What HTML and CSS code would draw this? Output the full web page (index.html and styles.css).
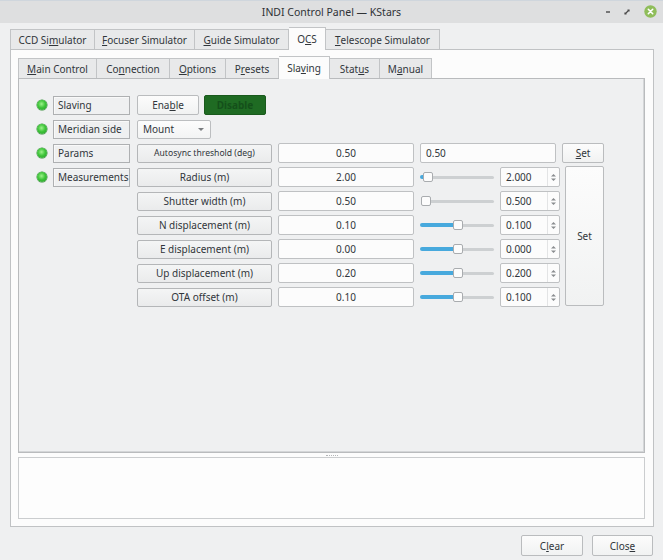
FILE: index.html
```html
<!DOCTYPE html>
<html>
<head>
<meta charset="utf-8">
<link rel="stylesheet" href="styles.css">
</head>
<body>
<div class="window">
  <div class="titlebar">
    <span class="title">INDI Control Panel — KStars</span>
    <div class="wm">
      <svg class="wm-min" width="10" height="10" viewBox="0 0 10 10"><path d="M3 5h4" stroke="#4a4a4a" stroke-width="1.4"/></svg>
      <svg class="wm-max" width="10" height="10" viewBox="0 0 10 10"><path d="M3 7l4-4M5.5 3H7v1.5M3 5.5V7h1.5" stroke="#4a4a4a" stroke-width="1.2" fill="none"/></svg>
      <svg class="wm-close" width="13" height="13" viewBox="0 0 13 13"><circle cx="6.5" cy="6.5" r="6.2" fill="#8fbd5a"/><path d="M4.3 4.3l4.4 4.4M8.7 4.3l-4.4 4.4" stroke="#ffffff" stroke-width="1.6" stroke-linecap="round"/></svg>
    </div>
  </div>
  <div class="body">
    <div class="tabbar outer">
      <div class="tab t-ccd">CCD Si<u>m</u>ulator</div>
      <div class="tab t-foc"><u>F</u>ocuser Simulator</div>
      <div class="tab t-guide"><u>G</u>uide Simulator</div>
      <div class="tab t-ocs sel">O<u>C</u>S</div>
      <div class="tab t-tel"><u>T</u>elescope Simulator</div>
    </div>
    <div class="outer-pane">
      <div class="tabbar inner">
        <div class="tab i-main"><u>M</u>ain Control</div>
        <div class="tab i-conn">Co<u>n</u>nection</div>
        <div class="tab i-opt"><u>O</u>ptions</div>
        <div class="tab i-pre">P<u>r</u>esets</div>
        <div class="tab i-sla sel">Sla<u>v</u>ing</div>
        <div class="tab i-sta">Stat<u>u</u>s</div>
        <div class="tab i-man">M<u>a</u>nual</div>
      </div>
      <div class="inner-pane">
        <div class="props">
          <div class="row">
            <span class="led"></span><span class="plabel">Slaving</span>
            <button class="btn enable">Ena<u>b</u>le</button>
            <button class="btn disable">Disable</button>
          </div>
          <div class="row">
            <span class="led"></span><span class="plabel">Meridian side</span>
            <div class="combo"><span>Mount</span><span class="arrow"></span></div>
          </div>
          <div class="row">
            <span class="led"></span><span class="plabel">Params</span>
            <div class="name small">Autosync threshold (deg)</div>
            <div class="field center">0.50</div>
            <div class="field wide">0.50</div>
            <button class="btn set"><u>S</u>et</button>
          </div>
          <div class="meas">
            <div class="meas-rows">
              <div class="row">
                <span class="led"></span><span class="plabel">Measurements</span>
                <div class="name">Radius (m)</div>
                <div class="field center">2.00</div>
                <div class="slider"><div class="fill f-radius"></div><div class="handle h-radius"></div></div>
                <div class="spin"><span class="val">2.000</span><span class="arrows"><svg width="7" height="11" viewBox="0 0 7 11"><path d="M1 4.5L3.5 2L6 4.5Z M1 6.5L3.5 9L6 6.5Z" fill="#8a8d90"/></svg></span></div>
              </div>
              <div class="row">
                <span class="led-sp"></span><span class="label-sp"></span>
                <div class="name">Shutter width (m)</div>
                <div class="field center">0.50</div>
                <div class="slider"><div class="handle h-shutter"></div></div>
                <div class="spin"><span class="val">0.500</span><span class="arrows"><svg width="7" height="11" viewBox="0 0 7 11"><path d="M1 4.5L3.5 2L6 4.5Z M1 6.5L3.5 9L6 6.5Z" fill="#8a8d90"/></svg></span></div>
              </div>
              <div class="row">
                <span class="led-sp"></span><span class="label-sp"></span>
                <div class="name">N displacement (m)</div>
                <div class="field center">0.10</div>
                <div class="slider"><div class="fill f-mid"></div><div class="handle h-mid"></div></div>
                <div class="spin"><span class="val">0.100</span><span class="arrows"><svg width="7" height="11" viewBox="0 0 7 11"><path d="M1 4.5L3.5 2L6 4.5Z M1 6.5L3.5 9L6 6.5Z" fill="#8a8d90"/></svg></span></div>
              </div>
              <div class="row">
                <span class="led-sp"></span><span class="label-sp"></span>
                <div class="name">E displacement (m)</div>
                <div class="field center">0.00</div>
                <div class="slider"><div class="fill f-mid"></div><div class="handle h-mid"></div></div>
                <div class="spin"><span class="val">0.000</span><span class="arrows"><svg width="7" height="11" viewBox="0 0 7 11"><path d="M1 4.5L3.5 2L6 4.5Z M1 6.5L3.5 9L6 6.5Z" fill="#8a8d90"/></svg></span></div>
              </div>
              <div class="row">
                <span class="led-sp"></span><span class="label-sp"></span>
                <div class="name">Up displacement (m)</div>
                <div class="field center">0.20</div>
                <div class="slider"><div class="fill f-mid"></div><div class="handle h-mid"></div></div>
                <div class="spin"><span class="val">0.200</span><span class="arrows"><svg width="7" height="11" viewBox="0 0 7 11"><path d="M1 4.5L3.5 2L6 4.5Z M1 6.5L3.5 9L6 6.5Z" fill="#8a8d90"/></svg></span></div>
              </div>
              <div class="row">
                <span class="led-sp"></span><span class="label-sp"></span>
                <div class="name">OTA offset (m)</div>
                <div class="field center">0.10</div>
                <div class="slider"><div class="fill f-mid"></div><div class="handle h-mid"></div></div>
                <div class="spin"><span class="val">0.100</span><span class="arrows"><svg width="7" height="11" viewBox="0 0 7 11"><path d="M1 4.5L3.5 2L6 4.5Z M1 6.5L3.5 9L6 6.5Z" fill="#8a8d90"/></svg></span></div>
              </div>
            </div>
            <button class="btn set-tall">Set</button>
          </div>
        </div>
      </div>
      <div class="splitter"><span class="dots"></span></div>
      <div class="log"></div>
    </div>
    <div class="buttons">
      <button class="btn bottom">C<u>l</u>ear</button>
      <button class="btn bottom close">Clos<u>e</u></button>
    </div>
  </div>
</div>
</body>
</html>
```

FILE: styles.css
```css
* { box-sizing: border-box; }
html, body { margin: 0; padding: 0; }
body {
  background: #eff0f1;
  font-family: "Noto Sans", "Open Sans", sans-serif;
  font-size: 10px;
  color: #31363b;
  width: 663px;
  height: 560px;
  overflow: hidden;
}
u { text-decoration: underline; text-underline-offset: 1px; text-decoration-thickness: 1px; }
button { font-family: inherit; font-size: inherit; color: inherit; margin: 0; }

.window { width: 663px; height: 560px; display: flex; flex-direction: column; border-top: 1px solid #cfd6dd; }
.titlebar {
  height: 22px;
  background: #dedfe0;
  display: flex;
  align-items: center;
  justify-content: center;
  position: relative;
  font-size: 10.5px;
  color: #2e3236;
}
.wm { position: absolute; right: 6px; top: 4px; display: flex; align-items: center; gap: 9px; }
.wm-min, .wm-max { display: block; }
.wm-close { display: block; margin-left: 3px; }

.body { flex: 1; padding: 6px 9px 0 10px; display: flex; flex-direction: column; }

.tabbar { display: flex; height: 20px; align-items: flex-end; position: relative; z-index: 2; }
.tab {
  height: 20px;
  border: 1px solid #c2c4c6;
  border-bottom: none;
  border-left: none;
  background: #e8e9ea;
  display: flex;
  align-items: center;
  justify-content: center;
  white-space: nowrap;
  color: #31363b;
}
.tab:first-child { border-left: 1px solid #c2c4c6; }
.tab.sel { background: #fcfcfc; height: 23px; margin-bottom: -1px; padding-bottom: 1px; }
.t-ccd { width: 85px; }
.t-foc { width: 100px; }
.t-guide { width: 94px; }
.t-ocs { width: 37px; }
.t-tel { width: 114px; }

.outer-pane {
  width: 644px;
  height: 478px;
  background: #fcfcfc;
  border: 1px solid #c0c2c4;
  padding: 8px 8px 0 7px;
  display: flex;
  flex-direction: column;
}
.i-main { width: 79px; }
.i-conn { width: 73px; }
.i-opt { width: 56px; }
.i-pre { width: 53px; }
.i-sla { width: 51px; }
.i-sta { width: 50px; }
.i-man { width: 52px; }
.inner .tab.sel { background: #fcfcfc; }

.inner-pane {
  width: 627px;
  height: 375px;
  background: #eff0f1;
  border: 1px solid #b9bbbd;
  box-shadow: inset -1px -1px 0 #d4d6d8;
  padding: 16px 0 0 18px;
}
.splitter { height: 4px; display: flex; justify-content: center; align-items: center; }
.dots { width: 12px; border-top: 1px dotted #b4b6b8; }
.log { width: 627px; height: 62px; background: #fdfdfd; border: 1px solid #cbcdcf; }

.props { display: flex; flex-direction: column; gap: 4px; }
.row { display: flex; align-items: center; height: 20px; }
.led {
  width: 10px; height: 10px; border-radius: 50%;
  background: radial-gradient(circle at 45% 40%, #9cf28a 0%, #3fc43a 45%, #24972a 100%);
  box-shadow: 0 0 0 0.5px #2f8a32;
}
.led-sp { width: 10px; height: 10px; }
.plabel {
  margin-left: 6px;
  width: 77px; height: 19px;
  border: 1px solid #aeb0b2;
  box-shadow: inset 1px 1px 0 #f9f9f9;
  background: #eff0f1;
  display: flex; align-items: center;
  padding-left: 4px;
  white-space: nowrap;
}
.label-sp { margin-left: 6px; width: 77px; height: 19px; }

.btn {
  height: 20px;
  border: 1px solid #babcbe;
  border-radius: 2px;
  background: linear-gradient(#fcfcfc, #f1f2f2);
  display: flex; align-items: center; justify-content: center;
  padding: 0;
}
.enable { margin-left: 7px; width: 62px; }
.disable {
  margin-left: 5px; width: 62px;
  background: #1f6b23;
  border-color: #1a5a1d;
  color: #14501a;
  font-weight: bold;
}
.combo {
  margin-left: 7px; width: 74px; height: 19px;
  border: 1px solid #bcbec0; border-radius: 2px;
  background: linear-gradient(#fcfcfc, #f3f4f4);
  display: flex; align-items: center; justify-content: space-between;
  padding: 0 6px 0 5px;
}
.arrow { width: 0; height: 0; border-left: 3px solid transparent; border-right: 3px solid transparent; border-top: 3px solid #7a7d80; }
.name {
  margin-left: 7px; width: 135px; height: 19px;
  border: 1px solid #b4b6b8; border-radius: 2px;
  background: linear-gradient(#f4f5f5, #eaebec);
  display: flex; align-items: center; justify-content: center;
  white-space: nowrap;
}
.name.small { font-size: 8.6px; }
.field {
  margin-left: 6px; width: 136px; height: 20px;
  border: 1px solid #bfc1c3; border-radius: 2px;
  background: #fcfcfc;
  display: flex; align-items: center;
}
.field.center { justify-content: center; }
.field.wide { padding-left: 5px; }
.set { margin-left: 6px; width: 42px; }

.meas { display: flex; gap: 5px; }
.meas-rows { display: flex; flex-direction: column; gap: 4px; }
.slider { margin-left: 6px; width: 74px; height: 20px; position: relative; }
.slider::before {
  content: ""; position: absolute; left: 2px; right: 0; top: 9px; height: 3px;
  border-radius: 2px; background: #cdd0d2;
}
.fill { position: absolute; left: 0; top: 8px; height: 4px; border-radius: 2px; background: #47a9dd; }
.f-radius { width: 6px; }
.f-mid { width: 36px; }
.handle {
  position: absolute; top: 5px; width: 10px; height: 10px;
  border: 1px solid #a9acaf; border-radius: 2px; background: #fcfcfc;
}
.h-radius { left: 3px; }
.h-shutter { left: 1px; }
.h-mid { left: 33px; }
.spin {
  margin-left: 6px; width: 60px; height: 20px;
  border: 1px solid #bfc1c3; border-radius: 2px;
  background: #fcfcfc;
  display: flex; align-items: center; justify-content: space-between;
}
.spin .val { padding-left: 5px; }
.arrows { width: 12px; height: 18px; border-left: 1px solid #e3e4e5; display: flex; align-items: center; justify-content: center; }
.arrows svg { display: block; }
.set-tall { width: 39px; height: 140px; margin-top: -1px; }

.buttons { display: flex; justify-content: flex-end; gap: 9px; padding-top: 8px; padding-right: 1px; }
.bottom { width: 62px; height: 21px; }
.close { width: 61px; }
```
